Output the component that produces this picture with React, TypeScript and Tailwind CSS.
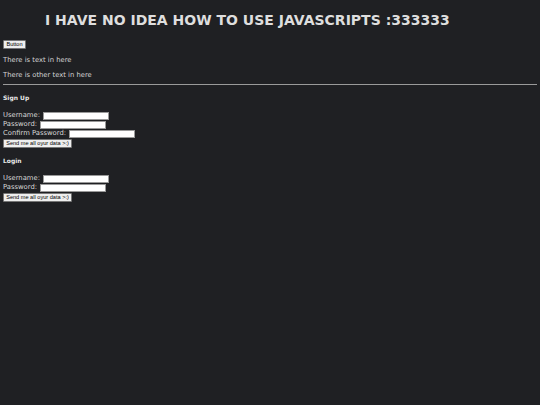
const font = { fontFamily: '"DejaVu Sans", Verdana, sans-serif' };
const buttonFont = { fontFamily: '"Liberation Sans", Arial, sans-serif' };

const Field = ({ label }: { label: string }) => (
    <div className="flex h-[9px] items-center leading-none">
        <label className="mr-[3px] text-[6.8px] text-[#d8d8d8]">{label}</label>
        <input type="text" className="h-[8px] w-[66px] border border-[#999] bg-white p-0" />
    </div>
);

const DataButton = () => (
    <button
        className="mt-[1px] flex h-[9px] w-[69px] items-center justify-center rounded-[1px] border border-[#767676] bg-[#efefef] text-[5.6px] leading-none text-black"
        style={buttonFont}
    >
        Send me all oyur data &gt;:)
    </button>
);

export default function App() {
    return (
        <div className="min-h-[405px] w-full bg-[#1f2023] px-[3px] text-[#d4d4d4]" style={font}>
            <h1 className="pt-[13px] pl-[42px] text-[14px] leading-[15px] font-bold text-[#dedede]">
                I HAVE NO IDEA HOW TO USE JAVASCRIPTS :333333
            </h1>

            <button
                className="mt-[12px] flex h-[9px] w-[23px] items-center justify-center rounded-[1px] border border-[#767676] bg-[#efefef] text-[5.6px] leading-none text-black"
                style={buttonFont}
            >
                Button
            </button>

            <p className="mt-[7px] text-[6.8px] leading-[9px]">There is text in here</p>
            <p className="mt-[6px] text-[6.8px] leading-[9px]">There is other text in here</p>

            <hr className="mt-[4px] border-t-[1.5px] border-[#9a9a9a]" />

            <h4 className="mt-[9px] text-[6px] leading-[8px] font-bold text-[#e8e8e8]">Sign Up</h4>
            <form className="mt-[9px] flex flex-col">
                <Field label="Username:" />
                <Field label="Password:" />
                <Field label="Confirm Password:" />
                <DataButton />
            </form>

            <h4 className="mt-[9px] text-[6px] leading-[8px] font-bold text-[#e8e8e8]">Login</h4>
            <form className="mt-[9px] flex flex-col">
                <Field label="Username:" />
                <Field label="Password:" />
                <DataButton />
            </form>
        </div>
    );
}
